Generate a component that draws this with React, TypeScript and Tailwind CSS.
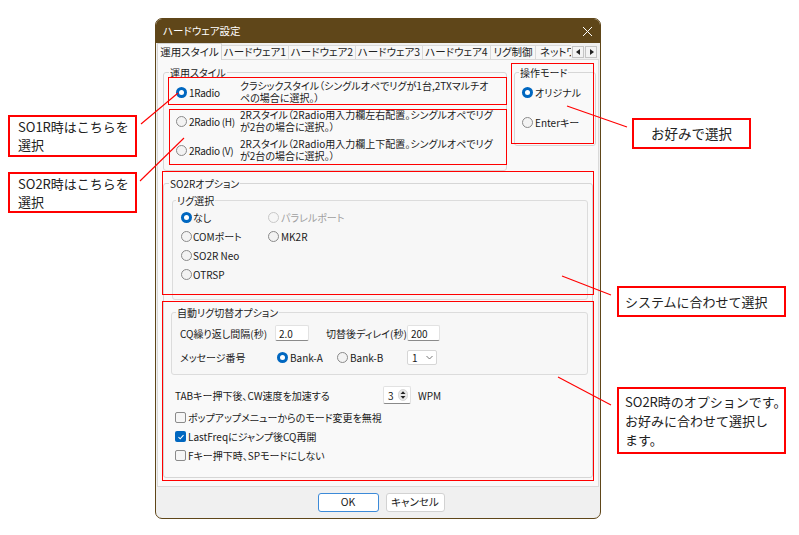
import React from 'react';

const JP = "[font-family:'Noto_Sans_CJK_JP',sans-serif] [font-feature-settings:'palt']";

function Radio({ checked = false, disabled = false }: { checked?: boolean; disabled?: boolean }) {
  if (checked) {
    return (
      <span className="w-[11px] h-[11px] rounded-full bg-[#0067c0] flex items-center justify-center shrink-0">
        <span className="w-[5px] h-[5px] rounded-full bg-white" />
      </span>
    );
  }
  return (
    <span
      className={`w-[11px] h-[11px] rounded-full border shrink-0 ${
        disabled ? 'border-[#c8c8c8] bg-[#f6f6f6]' : 'border-[#8a8a8a] bg-[#f3f3f3]'
      }`}
    />
  );
}

function Check({ checked = false }: { checked?: boolean }) {
  if (checked) {
    return (
      <span className="w-[11px] h-[11px] rounded-[2px] bg-[#0067c0] flex items-center justify-center shrink-0">
        <svg width="8" height="8" viewBox="0 0 8 8">
          <polyline points="1.5,4.2 3.2,5.8 6.5,2.2" fill="none" stroke="white" strokeWidth="1.1" />
        </svg>
      </span>
    );
  }
  return <span className="w-[11px] h-[11px] rounded-[2px] border border-[#8a8a8a] bg-[#f6f6f6] shrink-0" />;
}

function Legend({ children, className = '' }: { children: React.ReactNode; className?: string }) {
  return <legend className={`px-[1px] leading-[13px] text-[#1a1a1a] ${className}`}>{children}</legend>;
}

const tabs = [
  { label: 'ハードウェア1', w: 'w-[67px]' },
  { label: 'ハードウェア2', w: 'w-[67px]' },
  { label: 'ハードウェア3', w: 'w-[67px]' },
  { label: 'ハードウェア4', w: 'w-[68px]' },
  { label: 'リグ制御', w: 'w-[45px]' },
];

const styles = [
  {
    label: '1Radio',
    checked: true,
    desc: ['クラシックスタイル（シングルオペでリグが1台,2TXマルチオ', 'ペの場合に選択。）'],
  },
  {
    label: '2Radio (H)',
    checked: false,
    desc: ['2Rスタイル（2Radio用入力欄左右配置。シングルオペでリグ', 'が2台の場合に選択。）'],
  },
  {
    label: '2Radio (V)',
    checked: false,
    desc: ['2Rスタイル（2Radio用入力欄上下配置。シングルオペでリグ', 'が2台の場合に選択。）'],
  },
];

export default function App() {
  return (
    <div className="relative w-[799px] h-[535px] bg-white overflow-hidden">
      {/* Dialog */}
      <div
        className={`absolute left-[155px] top-[18px] w-[446px] h-[501px] flex flex-col bg-[#f0f0f0] border border-[#5f4619] rounded-[7px] overflow-hidden whitespace-nowrap text-[10px] text-[#1a1a1a] ${JP}`}
      >
        {/* Title bar */}
        <div className="h-[24px] bg-[#5f4619] flex items-center justify-between pl-[7px] pr-[6px] text-white text-[10.5px]">
          <span className="leading-none">ハードウェア設定</span>
          <svg width="11" height="11" viewBox="0 0 11 11" className="mr-[1px]">
            <path d="M1 1L10 10M10 1L1 10" stroke="white" strokeWidth="1" />
          </svg>
        </div>

        {/* Tabs */}
        <div className="h-[16px] flex items-end pl-px text-[10.5px]">
          <div className="relative z-[1] -mb-px w-[65px] h-[17px] bg-[#f9f9f9] border border-b-0 border-[#d4d4d4] flex items-center justify-center leading-none">
            運用スタイル
          </div>
          {tabs.map((t) => (
            <div
              key={t.label}
              className={`${t.w} h-[14px] bg-[#f7f7f7] border-t border-r border-[#dadada] flex items-center justify-center leading-none text-[#222]`}
            >
              {t.label}
            </div>
          ))}
          <div className="w-[35px] h-[14px] bg-[#f7f7f7] border-t border-[#dadada] overflow-hidden pl-[4px] flex items-center leading-none">
            ネットワ
          </div>
          <div className="flex gap-px h-[14px] items-center pl-px">
            <div className="w-[12px] h-[12px] bg-[#f3f3f3] border border-[#c4c4c4] flex items-center justify-center">
              <svg width="5" height="6" viewBox="0 0 5 6"><path d="M4 0L0 3L4 6Z" fill="#222" /></svg>
            </div>
            <div className="w-[12px] h-[12px] bg-[#f3f3f3] border border-[#c4c4c4] flex items-center justify-center">
              <svg width="5" height="6" viewBox="0 0 5 6"><path d="M1 0L5 3L1 6Z" fill="#222" /></svg>
            </div>
          </div>
        </div>

        {/* Tab page */}
        <div className="mx-px h-[428px] border border-[#d9d9d9] bg-[#f9f9f9] pl-[5px] pt-[6px]">
          <div className="flex items-start gap-[7px]">
            {/* 運用スタイル */}
            <fieldset className="w-[344px] h-[105px] border border-[#d6d6d6] rounded-[3px] p-0">
              <Legend className="ml-[5px]">運用スタイル</Legend>
              <div className="pl-[12px] pt-[1px] flex flex-col gap-[5px]">
                {styles.map((s) => (
                  <div key={s.label} className="h-[24px] flex items-center">
                    <div className="w-[64px] shrink-0 flex items-center gap-[2px]">
                      <Radio checked={s.checked} />
                      <span className="tracking-[-0.3px]">{s.label}</span>
                    </div>
                    <div className="flex flex-col">
                      <span className="leading-[12px]">{s.desc[0]}</span>
                      <span className="leading-[12px]">{s.desc[1]}</span>
                    </div>
                  </div>
                ))}
              </div>
            </fieldset>

            {/* 操作モード */}
            <fieldset className="w-[82px] h-[80px] border border-[#d6d6d6] rounded-[3px] p-0">
              <Legend className="ml-[4px]">操作モード</Legend>
              <div className="pl-[7px] pt-[5px] flex flex-col gap-[14px]">
                <div className="h-[16px] flex items-center gap-[2px]">
                  <Radio checked />
                  <span>オリジナル</span>
                </div>
                <div className="h-[16px] flex items-center gap-[2px]">
                  <Radio />
                  <span>Enterキー</span>
                </div>
              </div>
            </fieldset>
          </div>

          {/* SO2Rオプション */}
          <fieldset className="mt-[6px] w-[430px] h-[301px] border border-[#d6d6d6] rounded-[3px] p-0">
            <Legend className="ml-[5px]">SO2Rオプション</Legend>

            {/* リグ選択 */}
            <fieldset className="ml-[8px] mt-[4px] w-[416px] h-[106px] border border-[#dcdcdc] rounded-[3px] p-0 bg-[#f7f7f7]">
              <Legend className="ml-[3px]">リグ選択</Legend>
              <div className="pl-[8px] pt-[1px] flex flex-col">
                <div className="h-[19px] flex items-center">
                  <div className="w-[87px] flex items-center gap-[1px]">
                    <Radio checked />
                    <span>なし</span>
                  </div>
                  <div className="flex items-center gap-[2px] text-[#a0a0a0]">
                    <Radio disabled />
                    <span>パラレルポート</span>
                  </div>
                </div>
                <div className="h-[19px] flex items-center">
                  <div className="w-[87px] flex items-center gap-[1px]">
                    <Radio />
                    <span>COMポート</span>
                  </div>
                  <div className="flex items-center gap-[2px]">
                    <Radio />
                    <span>MK2R</span>
                  </div>
                </div>
                <div className="h-[19px] flex items-center gap-[1px]">
                  <Radio />
                  <span>SO2R Neo</span>
                </div>
                <div className="h-[19px] flex items-center gap-[1px]">
                  <Radio />
                  <span>OTRSP</span>
                </div>
              </div>
            </fieldset>

            {/* 自動リグ切替オプション */}
            <fieldset className="ml-[7px] mt-[6px] w-[417px] h-[69px] border border-[#dcdcdc] rounded-[3px] p-0 bg-[#f7f7f7]">
              <Legend className="ml-[4px]">自動リグ切替オプション</Legend>
              <div className="pl-[8px] pt-[5px] flex flex-col gap-[6px]">
                <div className="h-[18px] flex items-center">
                  <span className="w-[95px]">CQ繰り返し間隔(秒)</span>
                  <div className="w-[34px] h-[16px] bg-white border border-[#e2e2e2] border-b-[#8a8a8a] rounded-[2px] pl-[3px] flex items-center">
                    2.0
                  </div>
                  <span className="ml-[17px] w-[81px]">切替後ディレイ(秒)</span>
                  <div className="w-[33px] h-[16px] bg-white border border-[#e2e2e2] border-b-[#8a8a8a] rounded-[2px] pl-[3px] flex items-center">
                    200
                  </div>
                </div>
                <div className="h-[18px] flex items-center">
                  <span className="w-[97px]">メッセージ番号</span>
                  <div className="w-[60px] flex items-center gap-[2px]">
                    <Radio checked />
                    <span>Bank-A</span>
                  </div>
                  <div className="w-[70px] flex items-center gap-[2px]">
                    <Radio />
                    <span>Bank-B</span>
                  </div>
                  <div className="w-[30px] h-[15px] bg-white border border-[#d6d6d6] rounded-[2px] pl-[4px] pr-[3px] flex items-center justify-between">
                    <span>1</span>
                    <svg width="7" height="5" viewBox="0 0 7 5">
                      <polyline points="0.5,1 3.5,4 6.5,1" fill="none" stroke="#666" strokeWidth="0.9" />
                    </svg>
                  </div>
                </div>
              </div>
            </fieldset>

            {/* TAB row */}
            <div className="mt-[11px] pl-[11px] h-[18px] flex items-center">
              <span className="w-[208px]">TABキー押下後、CW速度を加速する</span>
              <div className="w-[28px] h-[18px] bg-white border border-[#e2e2e2] border-b-[#8a8a8a] rounded-[2px] pl-[4px] pr-[2px] flex items-center justify-between">
                <span>3</span>
                <svg width="10" height="12" viewBox="0 0 10 12">
                  <rect x="0.5" y="0.5" width="9" height="11" rx="4.5" fill="#e8e8e8" stroke="#c8c8c8" strokeWidth="0.6" />
                  <path d="M2.5 5L5 2.2L7.5 5Z" fill="#222" />
                  <path d="M2.5 7L5 9.8L7.5 7Z" fill="#222" />
                </svg>
              </div>
              <span className="ml-[7px]">WPM</span>
            </div>

            {/* Checkboxes */}
            <div className="mt-[4px] pl-[11px] flex flex-col">
              <div className="h-[19px] flex items-center gap-[2px]">
                <Check />
                <span>ポップアップメニューからのモード変更を無視</span>
              </div>
              <div className="h-[19px] flex items-center gap-[2px]">
                <Check checked />
                <span>LastFreqにジャンプ後CQ再開</span>
              </div>
              <div className="h-[19px] flex items-center gap-[2px]">
                <Check />
                <span>Fキー押下時、SPモードにしない</span>
              </div>
            </div>
          </fieldset>
        </div>

        {/* Buttons */}
        <div className="flex-1 flex justify-center items-start pt-[6px] pl-[6px] gap-[7px] text-[10.5px]">
          <button className="w-[61px] h-[19px] bg-white border border-[#3c8ad8] rounded-[3px] flex items-center justify-center leading-none">
            OK
          </button>
          <button className="w-[59px] h-[19px] bg-white border border-[#d2d2d2] rounded-[3px] flex items-center justify-center leading-none">
            キャンセル
          </button>
        </div>
      </div>

      {/* Red highlight boxes over the dialog */}
      <div className="absolute left-[168px] top-[77px] w-[339px] h-[28px] border border-[#ff0000]" />
      <div className="absolute left-[169px] top-[109px] w-[338px] h-[56px] border border-[#ff0000]" />
      <div className="absolute left-[511px] top-[63px] w-[83px] h-[81px] border border-[#ff0000]" />
      <div className="absolute left-[162px] top-[171px] w-[432px] h-[124px] border border-[#ff0000]" />
      <div className="absolute left-[162px] top-[301px] w-[432px] h-[180px] border border-[#ff0000]" />

      {/* Callout leader lines */}
      <svg className="absolute left-0 top-0 pointer-events-none" width="799" height="535">
        <g stroke="#ff0000" strokeWidth="1.1">
          <line x1="141" y1="124" x2="178" y2="93" />
          <line x1="140" y1="181" x2="184" y2="138" />
          <line x1="567" y1="106" x2="627" y2="127" />
          <line x1="562" y1="276" x2="611" y2="295" />
          <line x1="558" y1="377" x2="611" y2="405" />
        </g>
      </svg>

      {/* Callouts */}
      <div className="absolute left-[8px] top-[115px] w-[129px] h-[42px] border-2 border-[#ff0000] bg-white pl-[8px] flex flex-col justify-center text-[13px] leading-[18px] text-[#222] whitespace-nowrap [font-family:'Noto_Sans_CJK_JP',sans-serif]">
        <span>SO1R時はこちらを</span>
        <span>選択</span>
      </div>
      <div className="absolute left-[8px] top-[172px] w-[129px] h-[41px] border-2 border-[#ff0000] bg-white pl-[8px] flex flex-col justify-center text-[13px] leading-[18px] text-[#222] whitespace-nowrap [font-family:'Noto_Sans_CJK_JP',sans-serif]">
        <span>SO2R時はこちらを</span>
        <span>選択</span>
      </div>
      <div className="absolute left-[632px] top-[118px] w-[119px] h-[31px] border-2 border-[#ff0000] bg-white flex items-center justify-center text-[13.5px] text-[#222] whitespace-nowrap [font-family:'Noto_Sans_CJK_JP',sans-serif]">
        お好みで選択
      </div>
      <div className="absolute left-[617px] top-[286px] w-[169px] h-[31px] border-2 border-[#ff0000] bg-white pl-[6px] flex items-center text-[13px] text-[#222] whitespace-nowrap [font-family:'Noto_Sans_CJK_JP',sans-serif]">
        システムに合わせて選択
      </div>
      <div className="absolute left-[617px] top-[387px] w-[169px] h-[67px] border-2 border-[#ff0000] bg-white pl-[6px] flex flex-col justify-center text-[13px] leading-[19px] text-[#222] whitespace-nowrap [font-family:'Noto_Sans_CJK_JP',sans-serif]">
        <span>SO2R時のオプションです。</span>
        <span>お好みに合わせて選択し</span>
        <span>ます。</span>
      </div>
    </div>
  );
}
